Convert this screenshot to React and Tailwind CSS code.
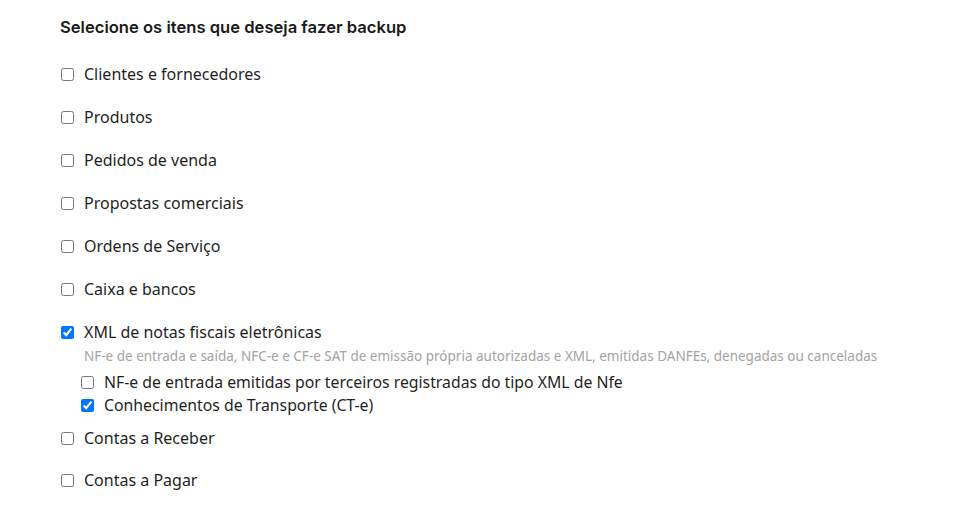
import React from "react";

function Item({ label, checked, className = "", textClass = "text-[16px]" }) {
  return (
    <label className={`flex items-center ${className}`}>
      <input type="checkbox" defaultChecked={checked} className="m-0 h-[13px] w-[13px] shrink-0" />
      <span className={`ml-[10px] ${textClass} leading-[20px] text-[#1f1f1f]`}>{label}</span>
    </label>
  );
}

export default function App() {
  const top = [
    "Clientes e fornecedores",
    "Produtos",
    "Pedidos de venda",
    "Propostas comerciais",
    "Ordens de Serviço",
    "Caixa e bancos",
  ];
  return (
    <div
      className="w-[969px] h-[522px] bg-white pl-[61px] pt-[15px]"
      style={{ fontFamily: '"Noto Sans", "Open Sans", sans-serif' }}
    >
      <h1
        className="text-[16.6px] leading-[24px] font-semibold text-[#1a1a1a] -ml-[1px]"
        style={{ fontFamily: 'Inter, "Noto Sans", sans-serif' }}
      >
        Selecione os itens que deseja fazer backup
      </h1>
      <div className="mt-[25px] flex flex-col">
        {top.map((t) => (
          <div key={t} className="h-[43px] flex items-start">
            <Item label={t} />
          </div>
        ))}
        <div className="flex flex-col">
          <Item label="XML de notas fiscais eletrônicas" checked />
          <div className="ml-[23px] mt-[4px] text-[13.5px] leading-[20px] text-[#a3a3a3]">
            NF-e de entrada e saída, NFC-e e CF-e SAT de emissão própria autorizadas e XML, emitidas DANFEs, denegadas ou canceladas
          </div>
          <div className="ml-[20px] mt-[6px] flex flex-col gap-[3px]">
            <Item textClass="text-[15.8px]" label="NF-e de entrada emitidas por terceiros registradas do tipo XML de Nfe" />
            <Item textClass="text-[15.8px]" label="Conhecimentos de Transporte (CT-e)" checked />
          </div>
        </div>
        <div className="mt-[13px] h-[42px] flex items-start">
          <Item label="Contas a Receber" />
        </div>
        <div className="flex items-start">
          <Item label="Contas a Pagar" />
        </div>
      </div>
    </div>
  );
}
